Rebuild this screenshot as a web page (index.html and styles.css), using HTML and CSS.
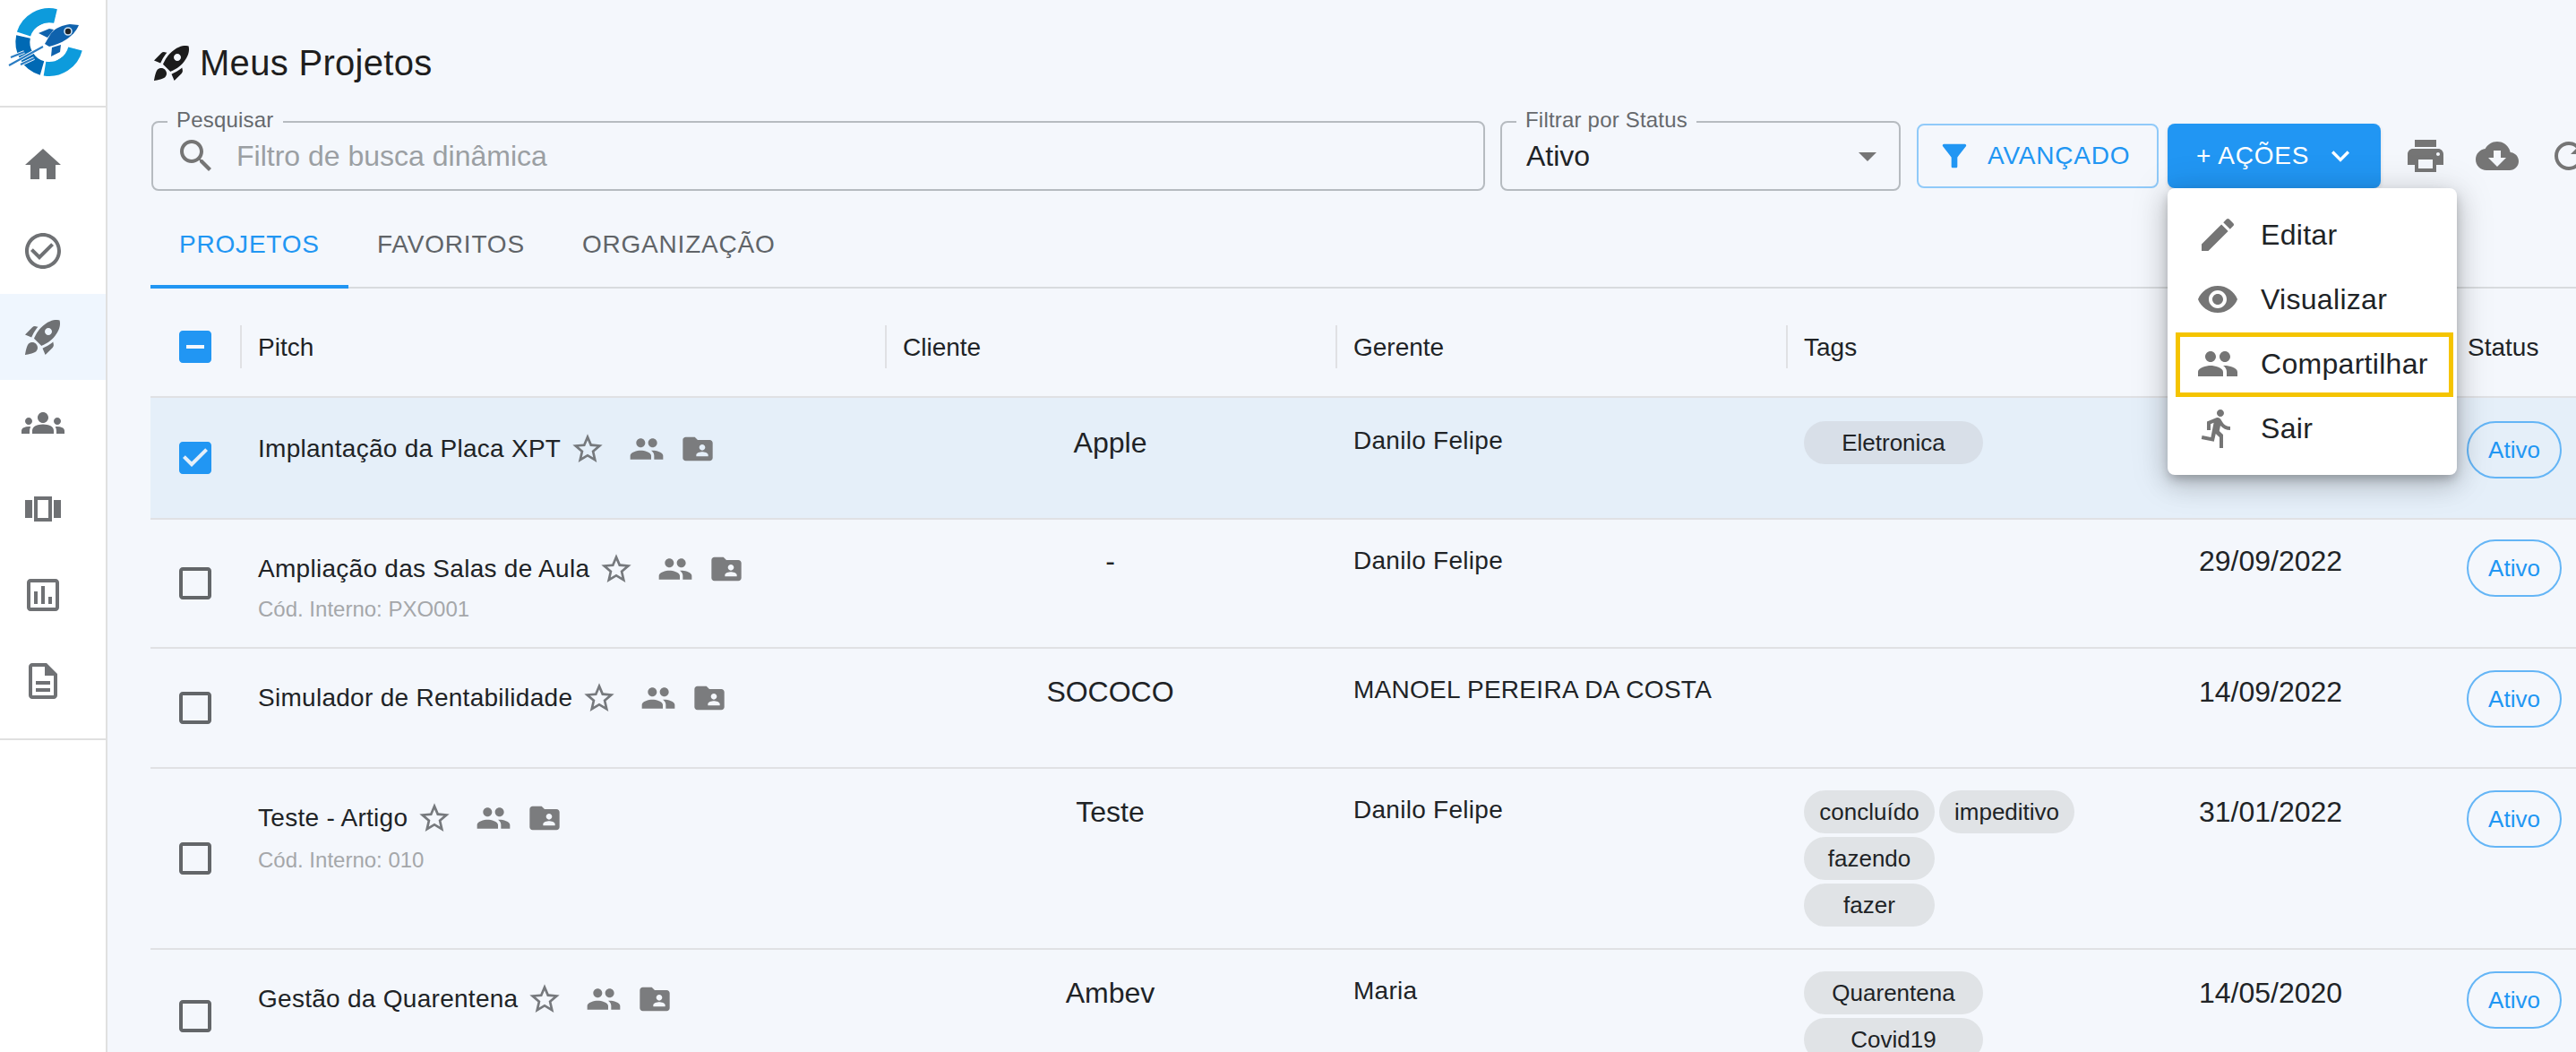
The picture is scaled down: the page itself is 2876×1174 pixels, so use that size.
FILE: index.html
```html
<!DOCTYPE html>
<html lang="pt-BR">
<head>
<meta charset="utf-8">
<title>Meus Projetos</title>
<link rel="stylesheet" href="styles.css">
</head>
<body>
<svg class="defs" aria-hidden="true">
  <symbol id="i-home" viewBox="0 0 24 24"><path d="M10 20v-6h4v6h5v-8h3L12 3 2 12h3v8z"/></symbol>
  <symbol id="i-check" viewBox="0 0 24 24"><path d="M16.59 7.58 10 14.17l-3.59-3.58L5 12l5 5 8-8zM12 2C6.48 2 2 6.48 2 12s4.48 10 10 10 10-4.48 10-10S17.52 2 12 2zm0 18c-4.42 0-8-3.58-8-8s3.58-8 8-8 8 3.58 8 8-3.58 8-8 8z"/></symbol>
  <symbol id="i-rocket" viewBox="0 0 24 24"><path d="M9.19 6.35c-2.04 2.29-3.44 5.58-3.57 5.89L2 10.69l4.05-4.05c.47-.47 1.15-.68 1.81-.55l1.33.26zM11.17 17s3.74-1.55 5.89-3.7c5.4-5.4 4.5-9.62 4.21-10.57-.95-.3-5.17-1.19-10.57 4.21C8.55 9.09 7 12.83 7 12.83L11.17 17zm6.48-2.19c-2.29 2.04-5.58 3.44-5.89 3.57L13.31 22l4.05-4.05c.47-.47.68-1.15.55-1.81l-.26-1.33zM9 18c0 .83-.34 1.58-.88 2.12C6.94 21.3 2 22 2 22s.7-4.94 1.88-6.12C4.42 15.34 5.17 15 6 15c1.66 0 3 1.34 3 3zm4-9c0-1.1.9-2 2-2s2 .9 2 2-.9 2-2 2-2-.9-2-2z"/></symbol>
  <symbol id="i-groups" viewBox="0 0 24 24"><path d="M12 12.75c1.63 0 3.07.39 4.24.9 1.08.48 1.76 1.56 1.76 2.73V18H6v-1.61c0-1.18.68-2.26 1.76-2.73 1.17-.52 2.61-.91 4.24-.91zM4 13c1.1 0 2-.9 2-2s-.9-2-2-2-2 .9-2 2 .9 2 2 2zm1.13 1.1c-.37-.06-.74-.1-1.13-.1-.99 0-1.93.21-2.78.58C.48 14.9 0 15.62 0 16.43V18h4.5v-1.61c0-.83.23-1.61.63-2.29zM20 13c1.1 0 2-.9 2-2s-.9-2-2-2-2 .9-2 2 .9 2 2 2zm4 3.43c0-.81-.48-1.53-1.22-1.85-.85-.37-1.79-.58-2.78-.58-.39 0-.76.04-1.13.1.4.68.63 1.46.63 2.29V18H24v-1.57zM12 6c1.66 0 3 1.34 3 3s-1.34 3-3 3-3-1.34-3-3 1.34-3 3-3z"/></symbol>
  <symbol id="i-carousel" viewBox="0 0 24 24"><path d="M2 7h4v10H2V7zm5 12h10V5H7v14zM9 7h6v10H9V7zm9 0h4v10h-4V7z" fill-rule="evenodd"/></symbol>
  <symbol id="i-chart" viewBox="0 0 24 24"><path d="M19 3H5c-1.1 0-2 .9-2 2v14c0 1.1.9 2 2 2h14c1.1 0 2-.9 2-2V5c0-1.1-.9-2-2-2zm0 16H5V5h14v14zM7 10h2v7H7zm4-3h2v10h-2zm4 6h2v4h-2z"/></symbol>
  <symbol id="i-doc" viewBox="0 0 24 24"><path d="M8 16h8v2H8zm0-4h8v2H8zm6-10H6c-1.1 0-2 .9-2 2v16c0 1.1.89 2 1.99 2H18c1.1 0 2-.9 2-2V8l-6-6zm4 18H6V4h7v5h5v11z"/></symbol>
  <symbol id="i-search" viewBox="0 0 24 24"><path d="M15.5 14h-.79l-.28-.27C15.41 12.59 16 11.11 16 9.5 16 5.91 13.09 3 9.5 3S3 5.91 3 9.5 5.91 16 9.5 16c1.61 0 3.09-.59 4.23-1.57l.27.28v.79l5 4.99L20.49 19l-4.99-5zm-6 0C7.01 14 5 11.99 5 9.5S7.01 5 9.5 5 14 7.01 14 9.5 11.99 14 9.5 14z"/></symbol>
  <symbol id="i-drop" viewBox="0 0 24 24"><path d="M7 10l5 5 5-5z"/></symbol>
  <symbol id="i-filter" viewBox="0 0 24 24"><path d="M4.25 5.61C6.27 8.2 10 13 10 13v6c0 .55.45 1 1 1h2c.55 0 1-.45 1-1v-6s3.72-4.8 5.74-7.39c.51-.66.04-1.61-.79-1.61H5.04c-.83 0-1.3.95-.79 1.61z"/></symbol>
  <symbol id="i-chevron" viewBox="0 0 24 24"><path d="M7.41 8.59 12 13.17l4.59-4.58L18 10l-6 6-6-6 1.41-1.41z"/></symbol>
  <symbol id="i-print" viewBox="0 0 24 24"><path d="M19 8H5c-1.66 0-3 1.34-3 3v6h4v4h12v-4h4v-6c0-1.66-1.34-3-3-3zm-3 11H8v-5h8v5zm3-7c-.55 0-1-.45-1-1s.45-1 1-1 1 .45 1 1-.45 1-1 1zm-1-9H6v4h12V3z"/></symbol>
  <symbol id="i-cloud" viewBox="0 0 24 24"><path d="M19.35 10.04C18.67 6.59 15.64 4 12 4 9.11 4 6.6 5.64 5.35 8.04 2.34 8.36 0 10.91 0 14c0 3.31 2.69 6 6 6h13c2.76 0 5-2.24 5-5 0-2.64-2.05-4.78-4.65-4.96zM17 13l-5 5-5-5h3V9h4v4h3z"/></symbol>
  <symbol id="i-refresh" viewBox="0 0 24 24"><path d="M17.65 6.35C16.2 4.9 14.21 4 12 4c-4.42 0-7.99 3.58-7.99 8s3.57 8 7.99 8c3.73 0 6.84-2.55 7.73-6h-2.08c-.82 2.33-3.04 4-5.65 4-3.31 0-6-2.69-6-6s2.69-6 6-6c1.66 0 3.14.69 4.22 1.78L13 11h7V4l-2.35 2.35z"/></symbol>
  <symbol id="i-edit" viewBox="0 0 24 24"><path d="M3 17.25V21h3.75L17.81 9.94l-3.75-3.75L3 17.25zM20.71 7.04c.39-.39.39-1.02 0-1.41l-2.34-2.34c-.39-.39-1.02-.39-1.41 0l-1.83 1.83 3.75 3.75 1.83-1.83z"/></symbol>
  <symbol id="i-eye" viewBox="0 0 24 24"><path d="M12 4.5C7 4.5 2.73 7.61 1 12c1.73 4.39 6 7.5 11 7.5s9.27-3.11 11-7.5c-1.73-4.39-6-7.5-11-7.5zM12 17c-2.76 0-5-2.24-5-5s2.24-5 5-5 5 2.24 5 5-2.24 5-5 5zm0-8c-1.66 0-3 1.34-3 3s1.34 3 3 3 3-1.34 3-3-1.34-3-3-3z"/></symbol>
  <symbol id="i-people" viewBox="0 0 24 24"><path d="M16 11c1.66 0 2.99-1.34 2.99-3S17.66 5 16 5c-1.66 0-3 1.34-3 3s1.34 3 3 3zm-8 0c1.66 0 2.99-1.34 2.99-3S9.66 5 8 5C6.34 5 5 6.34 5 8s1.34 3 3 3zm0 2c-2.33 0-7 1.17-7 3.5V19h14v-2.5c0-2.33-4.67-3.5-7-3.5zm8 0c-.29 0-.62.02-.97.05 1.16.84 1.97 1.97 1.97 3.45V19h6v-2.5c0-2.33-4.67-3.5-7-3.5z"/></symbol>
  <symbol id="i-run" viewBox="0 0 24 24"><path d="M13.49 5.48c1.1 0 2-.9 2-2s-.9-2-2-2-2 .9-2 2 .9 2 2 2zm-3.6 13.9 1-4.4 2.1 2v6h2v-7.5l-2.1-2 .6-3c1.3 1.5 3.3 2.5 5.5 2.5v-2c-1.9 0-3.5-1-4.3-2.4l-1-1.6c-.4-.6-1-1-1.7-1-.3 0-.5.1-.8.1l-5.2 2.2v4.7h2v-3.4l1.8-.7-1.6 8.1-4.9-1-.4 2 7 1.4z"/></symbol>
  <symbol id="i-star" viewBox="0 0 24 24"><path d="M22 9.24l-7.19-.62L12 2 9.19 8.63 2 9.24l5.46 4.73L5.82 21 12 17.27 18.18 21l-1.63-7.03L22 9.24zM12 15.4l-3.76 2.27 1-4.28-3.32-2.88 4.38-.38L12 6.1l1.71 4.04 4.38.38-3.32 2.88 1 4.28L12 15.4z"/></symbol>
  <symbol id="i-folder" viewBox="0 0 24 24"><path d="M20 6h-8l-2-2H4c-1.1 0-1.99.9-1.99 2L2 18c0 1.1.9 2 2 2h16c1.1 0 2-.9 2-2V8c0-1.1-.9-2-2-2zm-5 3c1.1 0 2 .9 2 2s-.9 2-2 2-2-.9-2-2 .9-2 2-2zm4 8h-8v-1c0-1.33 2.67-2 4-2s4 .67 4 2v1z"/></symbol>
  <symbol id="c-on" viewBox="0 0 24 24"><path d="M19 3H5c-1.11 0-2 .9-2 2v14c0 1.1.89 2 2 2h14c1.11 0 2-.9 2-2V5c0-1.1-.89-2-2-2zm-9 14l-5-5 1.41-1.41L10 14.17l7.59-7.59L19 8l-9 9z"/></symbol>
  <symbol id="c-some" viewBox="0 0 24 24"><path d="M19 3H5c-1.1 0-2 .9-2 2v14c0 1.1.9 2 2 2h14c1.1 0 2-.9 2-2V5c0-1.1-.9-2-2-2zm-2 10H7v-2h10v2z"/></symbol>
  <symbol id="c-off" viewBox="0 0 24 24"><path d="M19 5v14H5V5h14m0-2H5c-1.1 0-2 .9-2 2v14c0 1.1.9 2 2 2h14c1.1 0 2-.9 2-2V5c0-1.1-.9-2-2-2z"/></symbol>
</svg>

<div class="app">
  <aside class="sidebar">
    <div class="brand">
      <svg class="logo" viewBox="0 0 118 118" fill="none">
        <path d="M62 18A30 30 0 0 0 26.5 38" stroke="#0d9bdc" stroke-width="16"/>
        <path d="M26 41A30 30 0 0 0 47 76" stroke="#0069b4" stroke-width="16"/>
        <path d="M50 76.6A30 30 0 0 0 84 54.5" stroke="#0d9bdc" stroke-width="16"/>
        <path d="M10 73 48 52M12 64 27 58M23 72 38 65" stroke="#fff" stroke-width="4"/>
        <path d="M10 73 48 52M12 64 27 58M23 72 38 65" stroke="#2a7cc2" stroke-width="2"/>
        <path d="M88 28 78 27C70 28 62 31 57 37L50 49 55 52C62 50 68 48 74 44 80 40 85 35 88 28Z" fill="#0f62ad"/>
        <path d="M43 37 55 32 60 33 53 42Z" fill="#0f62ad"/>
        <path d="M57 63 58 53 68 50 67 58Z" fill="#0f62ad"/>
        <circle cx="76" cy="35" r="4" stroke="#cfe3f4" stroke-width="1.6"/>
      </svg>
    </div>
    <nav class="nav">
      <a class="nav-item"><svg class="ico"><use href="#i-home"/></svg></a>
      <a class="nav-item"><svg class="ico"><use href="#i-check"/></svg></a>
      <a class="nav-item is-active"><svg class="ico"><use href="#i-rocket"/></svg></a>
      <a class="nav-item"><svg class="ico"><use href="#i-groups"/></svg></a>
      <a class="nav-item"><svg class="ico"><use href="#i-carousel"/></svg></a>
      <a class="nav-item"><svg class="ico"><use href="#i-chart"/></svg></a>
      <a class="nav-item"><svg class="ico"><use href="#i-doc"/></svg></a>
    </nav>
  </aside>

  <main class="main">
    <h1 class="title"><svg class="title-ico"><use href="#i-rocket"/></svg>Meus Projetos</h1>

    <div class="toolbar">
      <div class="field field-search">
        <span class="field-label">Pesquisar</span>
        <svg class="ico search-ico"><use href="#i-search"/></svg>
        <span class="placeholder">Filtro de busca dinâmica</span>
      </div>
      <div class="field field-select">
        <span class="field-label">Filtrar por Status</span>
        <span class="select-value">Ativo</span>
        <svg class="ico drop-ico"><use href="#i-drop"/></svg>
      </div>
      <button class="btn btn-outline"><svg class="btn-ico"><use href="#i-filter"/></svg>AVANÇADO</button>
      <div class="actions">
        <button class="btn btn-solid">+ AÇÕES<svg class="btn-ico chevron"><use href="#i-chevron"/></svg></button>
        <ul class="menu">
          <li class="menu-item"><svg class="ico"><use href="#i-edit"/></svg>Editar</li>
          <li class="menu-item"><svg class="ico"><use href="#i-eye"/></svg>Visualizar</li>
          <li class="menu-item is-marked"><svg class="ico"><use href="#i-people"/></svg>Compartilhar</li>
          <li class="menu-item"><svg class="ico"><use href="#i-run"/></svg>Sair</li>
        </ul>
      </div>
      <div class="tools">
        <svg class="ico"><use href="#i-print"/></svg>
        <svg class="ico"><use href="#i-cloud"/></svg>
        <svg class="ico"><use href="#i-refresh"/></svg>
      </div>
    </div>

    <div class="tabs">
      <a class="tab is-current">PROJETOS</a>
      <a class="tab">FAVORITOS</a>
      <a class="tab">ORGANIZAÇÃO</a>
    </div>

    <section class="table">
      <div class="grid head">
        <div class="head-check"><svg class="ico box box-on"><use href="#c-some"/></svg></div>
        <div class="head-cell">Pitch</div>
        <div class="head-cell">Cliente</div>
        <div class="head-cell">Gerente</div>
        <div class="head-cell">Tags</div>
        <div class="head-cell head-blank"></div>
        <div class="head-cell">Status</div>
      </div>

      <div class="grid row r1">
        <div class="check"><svg class="ico box box-on"><use href="#c-on"/></svg></div>
        <div class="pitch">
          <div class="pitch-line">Implantação da Placa XPT<svg class="mini star"><use href="#i-star"/></svg><svg class="mini people"><use href="#i-people"/></svg><svg class="mini folder"><use href="#i-folder"/></svg></div>
        </div>
        <div class="client">Apple</div>
        <div class="manager">Danilo Felipe</div>
        <div class="tags"><div class="tag-line"><span class="tag tag-wide">Eletronica</span></div></div>
        <div class="date"></div>
        <div class="status"><span class="status-chip">Ativo</span></div>
      </div>

      <div class="grid row r2">
        <div class="check"><svg class="ico box"><use href="#c-off"/></svg></div>
        <div class="pitch">
          <div class="pitch-line">Ampliação das Salas de Aula<svg class="mini star"><use href="#i-star"/></svg><svg class="mini people"><use href="#i-people"/></svg><svg class="mini folder"><use href="#i-folder"/></svg></div>
          <div class="code">Cód. Interno: PXO001</div>
        </div>
        <div class="client">-</div>
        <div class="manager">Danilo Felipe</div>
        <div class="tags"></div>
        <div class="date">29/09/2022</div>
        <div class="status"><span class="status-chip">Ativo</span></div>
      </div>

      <div class="grid row r3">
        <div class="check"><svg class="ico box"><use href="#c-off"/></svg></div>
        <div class="pitch">
          <div class="pitch-line">Simulador de Rentabilidade<svg class="mini star"><use href="#i-star"/></svg><svg class="mini people"><use href="#i-people"/></svg><svg class="mini folder"><use href="#i-folder"/></svg></div>
        </div>
        <div class="client">SOCOCO</div>
        <div class="manager">MANOEL PEREIRA DA COSTA</div>
        <div class="tags"></div>
        <div class="date">14/09/2022</div>
        <div class="status"><span class="status-chip">Ativo</span></div>
      </div>

      <div class="grid row r4">
        <div class="check"><svg class="ico box"><use href="#c-off"/></svg></div>
        <div class="pitch">
          <div class="pitch-line">Teste - Artigo<svg class="mini star"><use href="#i-star"/></svg><svg class="mini people"><use href="#i-people"/></svg><svg class="mini folder"><use href="#i-folder"/></svg></div>
          <div class="code">Cód. Interno: 010</div>
        </div>
        <div class="client">Teste</div>
        <div class="manager">Danilo Felipe</div>
        <div class="tags">
          <div class="tag-line"><span class="tag tag-mid">concluído</span><span class="tag">impeditivo</span></div>
          <div class="tag-line"><span class="tag tag-mid">fazendo</span></div>
          <div class="tag-line"><span class="tag tag-mid">fazer</span></div>
        </div>
        <div class="date">31/01/2022</div>
        <div class="status"><span class="status-chip">Ativo</span></div>
      </div>

      <div class="grid row r5">
        <div class="check"><svg class="ico box"><use href="#c-off"/></svg></div>
        <div class="pitch">
          <div class="pitch-line">Gestão da Quarentena<svg class="mini star"><use href="#i-star"/></svg><svg class="mini people"><use href="#i-people"/></svg><svg class="mini folder"><use href="#i-folder"/></svg></div>
        </div>
        <div class="client">Ambev</div>
        <div class="manager">Maria</div>
        <div class="tags">
          <div class="tag-line"><span class="tag tag-wide">Quarentena</span></div>
          <div class="tag-line"><span class="tag tag-wide">Covid19</span></div>
        </div>
        <div class="date">14/05/2020</div>
        <div class="status"><span class="status-chip">Ativo</span></div>
      </div>
    </section>
  </main>
</div>
</body>
</html>
```

FILE: styles.css
```css
* { box-sizing: border-box; }
html, body { margin: 0; height: 100%; }
body {
  height: 1174px;
  overflow: hidden;
  background: #f4f7fc;
  color: #202326;
  font-family: "Liberation Sans", Arial, sans-serif;
}
.defs { display: none; }
svg { fill: currentColor; flex: none; display: block; }
.ico { width: 48px; height: 48px; color: #757575; }

.app { display: flex; height: 1174px; }

/* Sidebar */
.sidebar {
  flex: none;
  width: 120px;
  background: #fff;
  border-right: 2px solid #e0e0e0;
}
.brand { height: 120px; border-bottom: 2px solid #e0e0e0; }
.logo { width: 118px; height: 118px; }
.nav {
  height: 706px;
  padding: 16px 0;
  border-bottom: 2px solid #e0e0e0;
}
.nav-item {
  display: flex;
  align-items: center;
  height: 96px;
  padding-left: 24px;
}
.nav-item .ico { color: #6f7174; }
.is-active { background: #eff6fe; }

/* Main */
.main { flex: 1; min-width: 0; overflow: hidden; padding-left: 48px; }
.title {
  display: flex;
  align-items: center;
  height: 94px;
  margin: 0;
  padding: 46px 0 0;
  font-size: 40px;
  font-weight: 400;
  line-height: 48px;
  letter-spacing: .3px;
  color: #1e1e1e;
  white-space: nowrap;
}
.title-ico { width: 48px; height: 48px; margin-right: 7px; color: #1c1c1c; }

/* Toolbar */
.toolbar {
  display: flex;
  align-items: center;
  height: 78px;
  margin: 41px 0 0 1px;
  white-space: nowrap;
}
.field {
  position: relative;
  flex: none;
  display: flex;
  align-items: center;
  height: 78px;
  border: 2px solid #b6bbc0;
  border-radius: 8px;
}
.field-search { width: 1489px; padding-left: 24px; margin-right: 17px; }
.field-select { width: 447px; padding-left: 27px; margin-right: 18px; }
.field-label {
  position: absolute;
  left: 16px;
  top: -18px;
  padding: 0 10px;
  background: #f4f7fc;
  font-size: 24px;
  line-height: 30px;
  letter-spacing: .2px;
  color: #66696d;
}
.placeholder { margin-left: 21px; font-size: 32px; color: #9b9fa3; }
.select-value { font-size: 32px; color: #202326; }
.drop-ico { margin-left: auto; margin-right: 11px; }

.btn {
  flex: none;
  display: flex;
  align-items: center;
  height: 72px;
  border-radius: 8px;
  font-family: inherit;
  font-size: 28px;
  letter-spacing: .8px;
  cursor: pointer;
}
.btn-ico { width: 40px; height: 40px; }
.btn-outline {
  width: 270px;
  padding: 0 0 0 20px;
  margin-right: 10px;
  border: 2px solid #90caf9;
  background: transparent;
  color: #2196f3;
}
.btn-outline .btn-ico { margin-right: 17px; }
.btn-solid {
  width: 238px;
  padding: 0 0 0 32px;
  border: 0;
  background: #2196f3;
  color: #fff;
  box-shadow: 0 2px 4px rgba(0, 0, 0, .12);
}
.chevron { margin-left: 15px; }
.actions { position: relative; flex: none; margin-right: 26px; }

.menu {
  position: absolute;
  z-index: 5;
  left: 0;
  top: 72px;
  width: 323px;
  margin: 0;
  padding: 16px 0;
  list-style: none;
  background: #fff;
  border-radius: 8px;
  box-shadow: 0 6px 12px -2px rgba(0, 0, 0, .25), 0 10px 28px 2px rgba(0, 0, 0, .14), 0 4px 40px 6px rgba(0, 0, 0, .10);
}
.menu-item {
  position: relative;
  display: flex;
  align-items: center;
  height: 72px;
  padding-left: 32px;
  font-size: 32px;
  letter-spacing: .3px;
  color: #202326;
}
.menu-item .ico { margin-right: 24px; }
.is-marked::after {
  content: "";
  position: absolute;
  inset: 1px 4px -1px 9px;
  border: 5px solid #f5c400;
}
.tools { display: flex; gap: 32px; flex: none; }

/* Tabs */
.tabs {
  display: flex;
  height: 98px;
  margin-top: 11px;
  border-bottom: 2px solid #d8dbde;
}
.tab {
  flex: none;
  display: flex;
  align-items: center;
  height: 98px;
  padding: 0 32px;
  font-size: 28px;
  letter-spacing: .8px;
  color: #606468;
  white-space: nowrap;
}
.is-current {
  width: 221px;
  padding-top: 4px;
  border-bottom: 4px solid #2196f3;
  color: #2196f3;
}

/* Table */
.grid {
  display: grid;
  grid-template-columns: 100px 720px 503px 503px 341px 400px 141px;
  width: 2708px;
}
.head {
  height: 122px;
  padding-top: 10px;
  align-items: center;
  border-bottom: 2px solid #e0e1e4;
  font-size: 28px;
}
.head-check { padding-left: 26px; }
.head-cell {
  display: flex;
  align-items: center;
  height: 48px;
  padding: 2px 0 0 18px;
  border-left: 2px solid #e0e1e4;
  color: #202326;
}
.head-blank { border-left: 0; }
.box { color: #636669; }
.box-on { color: #2196f3; }

.row { border-bottom: 2px solid #e0e1e4; --shift: 0px; overflow: hidden; }
.r1 { height: 136px; background: #e5eff9; --shift: 2px; }
.r2 { height: 144px; --shift: -2px; }
.r3 { height: 134px; }
.r4 { height: 202px; }
.r5 { height: 150px; }

.check { display: flex; align-items: center; padding-left: 26px; }
.pitch { padding: calc(35px + var(--shift)) 0 0 20px; }
.r2 .pitch { padding-top: 35px; }
.r2 .code { margin-top: 9px; }
.pitch-line {
  display: flex;
  align-items: center;
  height: 40px;
  font-size: 28px;
  letter-spacing: .28px;
  white-space: nowrap;
  color: #202326;
}
.mini { width: 40px; height: 40px; color: #7b7c7e; }
.star { margin-left: 10px; color: #76797d; }
.people { margin-left: 26px; }
.folder { margin-left: 17px; }
.code { margin-top: 11px; font-size: 24px; line-height: 32px; color: #a5a7aa; }
.client, .date {
  padding-top: calc(28px + var(--shift));
  font-size: 32px;
  line-height: 40px;
  text-align: center;
}
.manager {
  padding: calc(26px + var(--shift)) 0 0 20px;
  font-size: 28px;
  line-height: 40px;
  letter-spacing: .28px;
  white-space: nowrap;
}
.r2 .manager { padding-top: 26px; }
.tags {
  display: flex;
  flex-direction: column;
  gap: 4px;
  padding: calc(24px + var(--shift)) 0 0 20px;
}
.tag-line { display: flex; gap: 5px; }
.tag {
  display: flex;
  align-items: center;
  justify-content: center;
  height: 48px;
  padding: 0 17px;
  border-radius: 24px;
  background: #e0e3e6;
  font-size: 26px;
  color: #202326;
}
.r1 .tag { background: #d8dfe8; }
.tag-wide { width: 200px; }
.tag-mid { width: 146px; padding: 0; }
.status { padding: calc(24px + var(--shift)) 0 0 19px; }
.status-chip {
  display: flex;
  align-items: center;
  justify-content: center;
  width: 106px;
  height: 64px;
  border: 2px solid #64b5f6;
  border-radius: 32px;
  font-size: 26px;
  color: #2196f3;
}
```
